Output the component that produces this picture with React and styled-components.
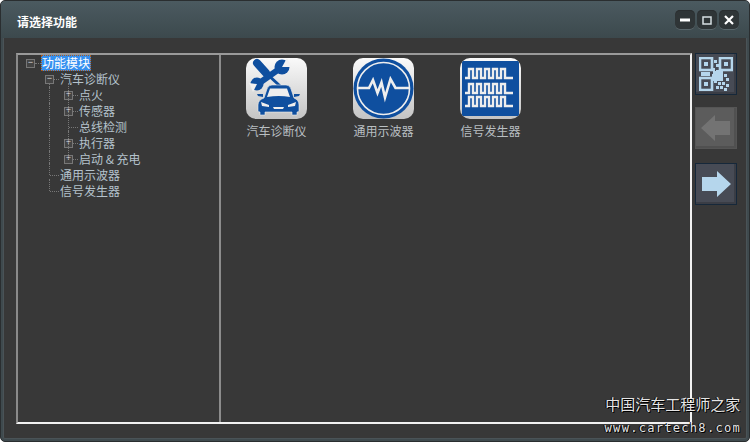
import styled, { createGlobalStyle } from 'styled-components';

const Global = createGlobalStyle`
  html, body { margin: 0; padding: 0; background: #fff; }
  body { font-family: "Noto Sans CJK SC", "Liberation Sans", sans-serif; }
`;

const Win = styled.div`
  position: relative;
  box-sizing: border-box;
  width: 750px;
  height: 442px;
  display: flex;
  flex-direction: column;
  background: #383838;
  border: 1px solid #2a2e30;
  border-radius: 5px;
  box-shadow: inset 0 0 0 2px #3f4a4e, inset 0 0 0 3px #4a5357;
  overflow: hidden;
`;

const TitleBar = styled.div`
  height: 37px;
  flex: none;
  display: flex;
  align-items: center;
  justify-content: space-between;
  padding: 0 10px 0 16px;
  background: linear-gradient(#4b5a60, #3c494d);
`;

const Title = styled.div`
  color: #fff;
  font-size: 12px;
  font-weight: 700;
  margin-top: 4px;
`;

const Controls = styled.div`
  display: flex;
  gap: 2px;
  margin-top: 1px;
`;

const CtrlBtn = styled.div`
  width: 20px;
  height: 20px;
  display: flex;
  align-items: center;
  justify-content: center;
  background: #2f3537;
  border-radius: 5px;
  box-shadow: inset 0 -1px 0 #5a676c, inset 0 1px 0 #2a2e30;
`;

const Body = styled.div`
  flex: 1;
  display: flex;
  gap: 3px;
  padding: 15px 10px 17px 15px;
  min-height: 0;
`;

const Panel = styled.div`
  box-sizing: border-box;
  width: 676px;
  display: flex;
  border: 2px solid #f2f2f2;
  border-top-color: #9a9a9a;
  border-left-color: #8a8a8a;
  background: #383838;
`;

const TreePane = styled.div`
  width: 201px;
  flex: none;
  border-right: 2px solid #8c8c8c;
`;

const Row = styled.div`
  position: relative;
  height: 16px;
  display: flex;
  align-items: center;
  padding-left: ${(p) => 8 + p.$level * 19 + (p.$indent || 0)}px;
`;

const Toggle = styled.span`
  box-sizing: border-box;
  width: 9px;
  height: 9px;
  flex: none;
  display: flex;
  align-items: center;
  justify-content: center;
  border: 1px solid #777;
  color: #ddd;
  background: #444;
  font-family: "Liberation Mono", monospace;
  font-size: 9px;
  line-height: 7px;
`;

const Dash = styled.span`
  width: ${(p) => p.$w}px;
  flex: none;
  border-top: 1px dotted #777;
`;

const Guide = styled.span`
  position: absolute;
  left: ${(p) => p.$x}px;
  top: ${(p) => p.$top}px;
  height: ${(p) => p.$h}px;
  border-left: 1px dotted #777;
`;

const Label = styled.span`
  box-sizing: border-box;
  font-size: 12px;
  line-height: 16px;
  height: 16px;
  padding: 0 1px;
  color: ${(p) => (p.$sel ? '#fff' : '#b4c2cc')};
  background: ${(p) => (p.$sel ? '#3490f0' : 'transparent')};
  outline: ${(p) => (p.$sel ? '1px dotted #a85a20' : 'none')};
  outline-offset: -1px;
`;

const IconPane = styled.div`
  flex: 1;
  display: flex;
  align-items: flex-start;
  padding: 3px 0 0 2px;
`;

const Tool = styled.div`
  width: 107px;
  flex: none;
  display: flex;
  flex-direction: column;
  align-items: center;
  gap: 4px;
`;

const ToolIcon = styled.div`
  width: 61px;
  height: 61px;
  border-radius: 10px;
  overflow: hidden;
  background: linear-gradient(#fafafa, #c4c4c4);
`;

const ToolName = styled.div`
  color: #b9bfc2;
  font-size: 12px;
  line-height: 16px;
`;

const Side = styled.div`
  display: flex;
  flex-direction: column;
`;

const SideBtn = styled.div`
  box-sizing: border-box;
  width: 42px;
  height: 42px;
  margin-top: ${(p) => p.$mt || 0}px;
  display: flex;
  align-items: center;
  justify-content: center;
  border: 1px solid ${(p) => (p.$off ? '#555' : '#16283a')};
  background: ${(p) => (p.$off ? '#5c5c5c' : '#474b55')};
  box-shadow: inset -2px -2px 0 ${(p) => (p.$off ? '#505050' : '#3a3d45')};
`;

const Watermark = styled.div`
  position: absolute;
  right: 8px;
  bottom: 6px;
  display: flex;
  flex-direction: column;
  align-items: center;
  gap: 7px;
  color: #e4e4e4;
  text-shadow: 1px 1px 0 #000, -1px 0 0 #000;
`;

const MarkCn = styled.div`
  font-size: 15px;
  line-height: 20px;
`;

const MarkUrl = styled.div`
  font-family: "DejaVu Sans Mono", monospace;
  font-size: 12px;
  line-height: 14px;
  letter-spacing: 1.3px;
`;

const BLUE = '#0f4f9f';
const PALE = '#b5d6ec';

function CarIcon() {
  return (
    <svg viewBox="0 0 61 61" width="61" height="61">
      <path d="M11 5 L20 15" stroke={BLUE} strokeWidth="8" strokeLinecap="round" fill="none" />
      <path d="M20 15 L34 28" stroke={BLUE} strokeWidth="3" fill="none" />
      <path d="M36 9 L12 26" stroke={BLUE} strokeWidth="6" fill="none" />
      <circle cx="36" cy="9" r="7.5" fill={BLUE} />
      <circle cx="11" cy="26" r="6.5" fill={BLUE} />
      <path d="M36 9 L41 0 L46 9 Z" fill="#f2f2f2" />
      <path d="M11 26 L3 25 L7 34 Z" fill="#f0f0f0" />
      <path d="M18 40 L21 31 Q22 27 26 27 L40 27 Q44 27 45 31 L48 40 Q53 42 53 47 L53 53 Q53 54 51 54 L51 57 L46 57 L46 54 L19 54 L19 57 L14 57 L14 54 Q12 54 12 53 L12 47 Q12 42 18 40 Z" fill={BLUE} stroke="#eee" strokeWidth="0.6" />
      <path d="M21 39 L24 30.5 L41 30.5 L44 39 Q33 37 21 39 Z" fill="#eee" />
      <path d="M15 44 L23 47 L23 49 L16 48 Z M50 44 L42 47 L42 49 L49 48 Z M27 49 L38 49 L37 51 L28 51 Z" fill="#eee" />
      <path d="M11 36 L17 36 L17 39 L12 38 Z M54 36 L48 36 L48 39 L53 38 Z" fill={BLUE} />
    </svg>
  );
}

function ScopeIcon() {
  return (
    <svg viewBox="0 0 61 61" width="61" height="61">
      <circle cx="30.5" cy="30.5" r="30" fill={BLUE} />
      <circle cx="30.5" cy="30.5" r="26" fill="none" stroke="#eee" strokeWidth="1.6" />
      <path d="M5 30 H16 L20 22 L24.5 35 L28.5 24.5 L32 39.5 L37.5 21 L42.5 30 H56" fill="none" stroke="#eee" strokeWidth="2.6" />
    </svg>
  );
}

function SquareIcon() {
  const wave = (y) => {
    let d = `M5 ${y + 9} H9`;
    for (let x = 9; x < 49; x += 8) d += ` V${y} H${x + 4} V${y + 9} H${x + 8}`;
    return d + ' H53';
  };
  return (
    <svg viewBox="0 0 61 61" width="61" height="61">
      <rect x="2" y="3" width="57" height="55" fill={BLUE} />
      {[11, 26, 39].map((y) => (
        <path key={y} d={wave(y)} fill="none" stroke="#eee" strokeWidth="2.4" />
      ))}
    </svg>
  );
}

function QrIcon() {
  const dots = [
    [15, 3], [17, 7], [13, 11], [17, 13], [21, 15], [25, 17], [13, 17], [17, 19], [21, 21], [27, 21],
    [15, 23], [19, 25], [23, 25], [27, 27], [17, 29], [21, 29], [25, 31],
  ];
  return (
    <svg viewBox="0 0 34 34" width="34" height="34">
      {[[1, 1], [21, 1], [1, 21]].map(([x, y]) => (
        <g key={x + '-' + y}>
          <rect x={x} y={y} width="12" height="12" fill="none" stroke={PALE} strokeWidth="2.6" />
          <rect x={x + 4} y={y + 4} width="4" height="4" fill={PALE} />
        </g>
      ))}
      <rect x="2" y="15" width="9" height="4" fill={PALE} />
      <rect x="14" y="14" width="10" height="10" fill={PALE} />
      {dots.map(([x, y]) => (
        <rect key={x + '-' + y} x={x} y={y} width="3" height="3" fill={PALE} />
      ))}
    </svg>
  );
}

function Arrow({ left, color }) {
  return (
    <svg viewBox="0 0 30 26" width="30" height="26">
      <path
        d={left ? 'M0 13 L14 0 L14 6 L29 6 L29 20 L14 20 L14 26 Z' : 'M30 13 L16 0 L16 6 L1 6 L1 20 L16 20 L16 26 Z'}
        fill={color}
      />
    </svg>
  );
}

const TREE = [
  { level: 0, text: '功能模块', toggle: '−', sel: true, dash: 6 },
  { level: 1, text: '汽车诊断仪', toggle: '−', dash: 5 },
  { level: 2, text: '点火', toggle: '+', dash: 5 },
  { level: 2, text: '传感器', toggle: '+', dash: 5 },
  { level: 2, text: '总线检测', dash: 9, indent: 5 },
  { level: 2, text: '执行器', toggle: '+', dash: 5 },
  { level: 2, text: '启动 & 充电', toggle: '+', dash: 5 },
  { level: 1, text: '通用示波器', dash: 9, indent: 5 },
  { level: 1, text: '信号发生器', dash: 9, indent: 5 },
];

export default function App() {
  return (
    <>
      <Global />
      <Win>
        <TitleBar>
          <Title>请选择功能</Title>
          <Controls>
            <CtrlBtn>
              <svg width="10" height="4"><rect width="10" height="3" y="0.5" fill="#fff" /></svg>
            </CtrlBtn>
            <CtrlBtn>
              <svg width="10" height="9"><rect x="1" y="1" width="8" height="7" fill="none" stroke="#d8e0e4" strokeWidth="1.5" /></svg>
            </CtrlBtn>
            <CtrlBtn>
              <svg width="10" height="10"><path d="M1 1 L9 9 M9 1 L1 9" stroke="#fff" strokeWidth="2.2" /></svg>
            </CtrlBtn>
          </Controls>
        </TitleBar>
        <Body>
          <Panel>
            <TreePane>
              {TREE.map((n, i) => (
                <Row key={i} $level={n.level} $indent={n.indent}>
                  {n.level === 1 && <Guide $x={31} $top={-4} $h={i === 1 ? 4 : 12} />}
                  {n.level === 1 && i === 1 && <Guide $x={31} $top={12} $h={4} />}
                  {n.level === 2 && <Guide $x={50} $top={-4} $h={i === 6 ? 12 : 20} />}
                  {n.level === 2 && <Guide $x={31} $top={0} $h={16} />}
                  {n.toggle && <Toggle>{n.toggle}</Toggle>}
                  <Dash $w={n.dash} />
                  <Label $sel={n.sel}>{n.text}</Label>
                </Row>
              ))}
            </TreePane>
            <IconPane>
              <Tool>
                <ToolIcon><CarIcon /></ToolIcon>
                <ToolName>汽车诊断仪</ToolName>
              </Tool>
              <Tool>
                <ToolIcon><ScopeIcon /></ToolIcon>
                <ToolName>通用示波器</ToolName>
              </Tool>
              <Tool>
                <ToolIcon><SquareIcon /></ToolIcon>
                <ToolName>信号发生器</ToolName>
              </Tool>
            </IconPane>
          </Panel>
          <Side>
            <SideBtn><QrIcon /></SideBtn>
            <SideBtn $off $mt={12}><Arrow left color="#737373" /></SideBtn>
            <SideBtn $mt={14}><Arrow color={PALE} /></SideBtn>
          </Side>
        </Body>
        <Watermark>
          <MarkCn>中国汽车工程师之家</MarkCn>
          <MarkUrl>www.cartech8.com</MarkUrl>
        </Watermark>
      </Win>
    </>
  );
}
